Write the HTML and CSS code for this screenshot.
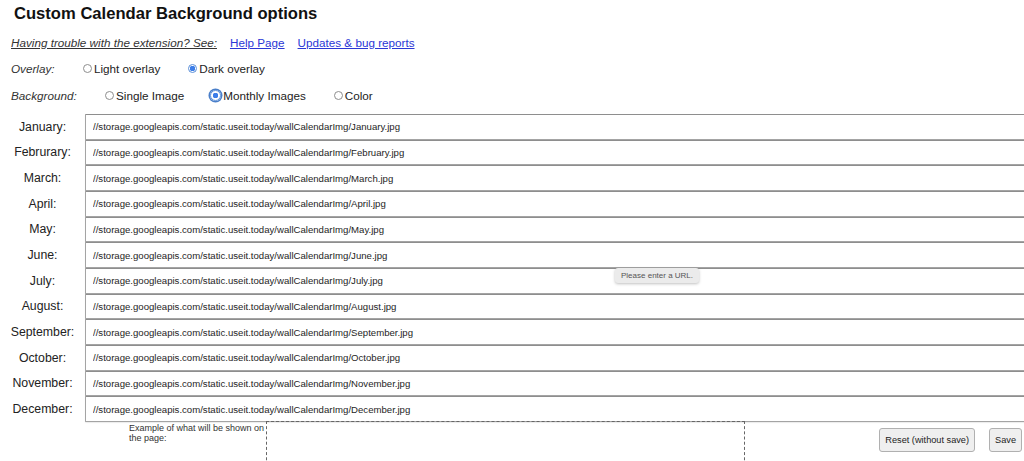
FILE: index.html
```html
<!DOCTYPE html>
<html>
<head>
<meta charset="utf-8">
<link rel="stylesheet" href="styles.css">
</head>
<body>
<div class="page">
  <h1 class="title">Custom Calendar Background options</h1>
  <div class="help">
    <span class="trouble">Having trouble with the extension? See:</span>
    <a class="link" href="#">Help Page</a>
    <a class="link" href="#">Updates &amp; bug reports</a>
  </div>
  <div class="opt overlay">
    <span class="optlabel ov">Overlay:</span>
    <label class="radio"><input type="radio" name="ov"><span>Light overlay</span></label>
    <label class="radio r2"><input type="radio" name="ov" checked><span>Dark overlay</span></label>
  </div>
  <div class="opt bg">
    <span class="optlabel bgl">Background:</span>
    <label class="radio"><input type="radio" name="bg"><span>Single Image</span></label>
    <label class="radio r2 focus"><input type="radio" name="bg" checked><span>Monthly Images</span></label>
    <label class="radio r2"><input type="radio" name="bg"><span>Color</span></label>
  </div>
  <div class="months">
    <span class="m">January:</span><input class="url" value="//storage.googleapis.com/static.useit.today/wallCalendarImg/January.jpg">
    <span class="m">Februrary:</span><input class="url" value="//storage.googleapis.com/static.useit.today/wallCalendarImg/February.jpg">
    <span class="m">March:</span><input class="url" value="//storage.googleapis.com/static.useit.today/wallCalendarImg/March.jpg">
    <span class="m">April:</span><input class="url" value="//storage.googleapis.com/static.useit.today/wallCalendarImg/April.jpg">
    <span class="m">May:</span><input class="url" value="//storage.googleapis.com/static.useit.today/wallCalendarImg/May.jpg">
    <span class="m">June:</span><input class="url" value="//storage.googleapis.com/static.useit.today/wallCalendarImg/June.jpg">
    <span class="m">July:</span><input class="url" value="//storage.googleapis.com/static.useit.today/wallCalendarImg/July.jpg">
    <span class="m">August:</span><input class="url" value="//storage.googleapis.com/static.useit.today/wallCalendarImg/August.jpg">
    <span class="m">September:</span><input class="url" value="//storage.googleapis.com/static.useit.today/wallCalendarImg/September.jpg">
    <span class="m">October:</span><input class="url" value="//storage.googleapis.com/static.useit.today/wallCalendarImg/October.jpg">
    <span class="m">November:</span><input class="url" value="//storage.googleapis.com/static.useit.today/wallCalendarImg/November.jpg">
    <span class="m">December:</span><input class="url" value="//storage.googleapis.com/static.useit.today/wallCalendarImg/December.jpg">
  </div>
  <div class="bottom">
    <div class="example">Example of what will be shown on the page:</div>
    <div class="preview"></div>
    <div class="buttons">
      <button class="btn">Reset (without save)</button>
      <button class="btn">Save</button>
    </div>
  </div>
  <div class="tooltip">Please enter a URL.</div>
</div>
</body>
</html>
```
FILE: styles.css
```css
html, body {
  margin: 0;
  padding: 0;
  overflow: hidden;
  background: #fff;
}
body {
  font-family: "Liberation Sans", Arial, sans-serif;
  color: #1e1e1e;
  width: 1024px;
  height: 461px;
}
.page {
  position: relative;
  padding-top: 2px;
}
.title {
  margin: 0;
  padding-left: 14px;
  font-size: 16.6px;
  line-height: 24px;
  font-weight: 700;
  color: #111;
}
.help {
  display: flex;
  align-items: baseline;
  padding-left: 11px;
  margin-top: 9px;
  font-size: 11.7px;
  line-height: 16px;
}
.trouble {
  font-style: italic;
  text-decoration: underline;
  color: #333;
}
.link {
  color: #2b37d6;
  text-decoration: underline;
  margin-left: 13px;
}
.opt {
  display: flex;
  align-items: center;
  padding-left: 11px;
  font-size: 11.7px;
  height: 16px;
}
.overlay { margin-top: 9px; }
.bg { margin-top: 11px; }
.optlabel {
  font-style: italic;
  color: #333;
}
.ov { width: 72px; }
.bgl { width: 94px; }
.radio {
  display: flex;
  align-items: center;
  color: #222;
}
.r2 { margin-left: 28px; }
.radio input {
  -webkit-appearance: none;
  appearance: none;
  width: 9px;
  height: 9px;
  margin: 0 2px 0 0;
  border: 1px solid #8e8e8e;
  border-radius: 50%;
  background: #fff;
  box-sizing: border-box;
}
.radio input:checked {
  border-color: #5b8fd8;
  background: radial-gradient(circle, #3d7ee8 0 2.6px, #fff 3px);
}
.focus input {
  width: 11px;
  height: 11px;
  box-shadow: 0 0 0 1.5px #4a7fc9;
}
.focus { margin-left: 26px; }
.months {
  display: grid;
  grid-template-columns: 85px 960px;
  grid-auto-rows: 25.67px;
  margin-top: 11px;
}
.m {
  display: flex;
  align-items: center;
  justify-content: center;
  font-size: 12.3px;
  color: #222;
}
.url {
  box-sizing: border-box;
  height: 25.67px;
  margin: 0;
  padding: 0 0 0 7px;
  border: 1px solid #a4a4a4;
  border-top-color: #8e8e8e;
  border-radius: 1px;
  font-family: "Liberation Sans", Arial, sans-serif;
  font-size: 9.6px;
  color: #1e1e1e;
  background: #fff;
  box-shadow: 0 1px 1px rgba(0,0,0,0.08);
  outline: none;
}
.bottom {
  display: flex;
  align-items: flex-start;
}
.example {
  width: 137px;
  margin-left: 129px;
  margin-top: 1px;
  font-size: 9px;
  line-height: 10px;
  color: #333;
}
.preview {
  width: 479px;
  height: 60px;
  border: 1px dashed #666;
  border-bottom: none;
  box-sizing: border-box;
  margin-top: -1px;
}
.buttons {
  display: flex;
  gap: 14px;
  margin-left: auto;
  margin-right: 2px;
  margin-top: 6px;
}
.btn {
  height: 24px;
  padding: 0 5px;
  font-family: "Liberation Sans", Arial, sans-serif;
  font-size: 9.2px;
  color: #222;
  background: #efefef;
  border: 1px solid #b0b0b0;
  border-radius: 3px;
}
.tooltip {
  position: absolute;
  left: 615px;
  top: 268px;
  padding: 2px 6px;
  font-size: 8px;
  line-height: 11px;
  color: #555;
  background: #ebebeb;
  border-radius: 3px;
  box-shadow: 0 1px 3px rgba(0,0,0,0.25);
}
```
